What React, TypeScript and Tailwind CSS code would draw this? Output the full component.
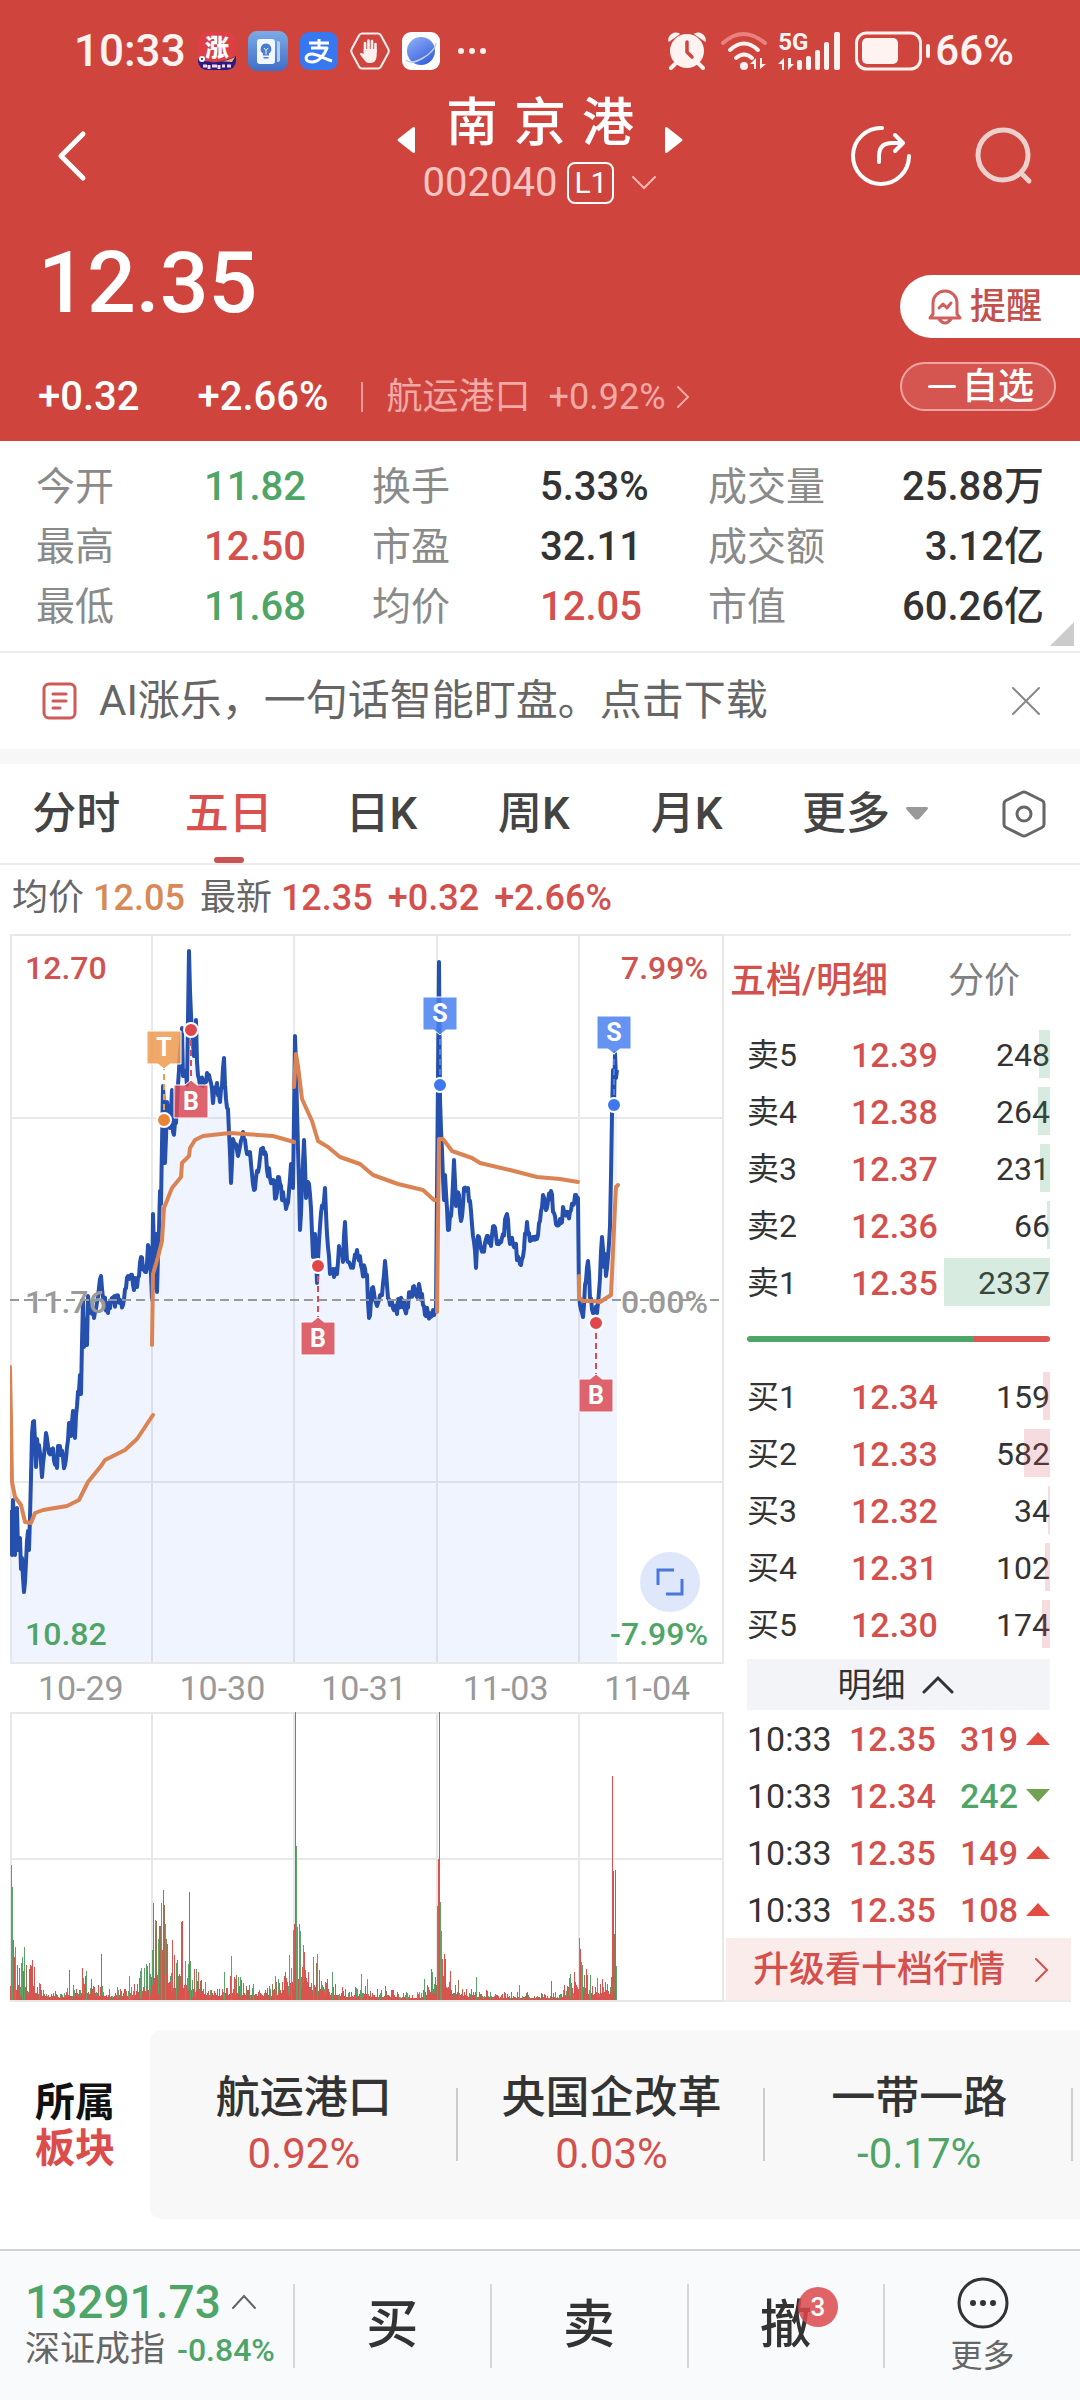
import React from "react";

type Point = [number, number];

const RED = "text-[#d4504d]";
const GREEN = "text-[#4fa567]";

/* ---------- deterministic noise for the intraday series ---------- */

function makeRandom(seed: number) {
  let state = seed;
  return () => {
    state = (state * 1664525 + 1013904223) % 4294967296;
    return state / 4294967296;
  };
}

function roughen(points: Point[], amplitude: number, random: () => number): Point[] {
  const out: Point[] = [];
  for (let i = 0; i < points.length - 1; i++) {
    const [x0, y0] = points[i];
    const [x1, y1] = points[i + 1];
    out.push(points[i]);
    const steps = Math.floor(x1 - x0);
    for (let s = 1; s < steps; s++) {
      const t = s / steps;
      out.push([x0 + (x1 - x0) * t, y0 + (y1 - y0) * t + (random() - 0.5) * 2 * amplitude]);
    }
  }
  out.push(points[points.length - 1]);
  return out;
}

function toPath(points: Point[]) {
  return points.map(([x, y], i) => `${i ? "L" : "M"}${x.toFixed(1)} ${y.toFixed(1)}`).join("");
}

/* ---------- chart data ---------- */

const PRICE: Point[] = [
  [10, 1510], [12, 1555], [13, 1500], [15, 1555], [17, 1508], [18, 1550], [20, 1538], [21, 1569], [22, 1558], [24, 1592],
  [26, 1562], [28, 1531], [29, 1550], [31, 1477], [32, 1434], [34, 1421], [36, 1467], [37, 1439], [40, 1453], [42, 1477],
  [46, 1433], [49, 1453], [52, 1450], [57, 1468], [58, 1446], [65, 1465], [69, 1423], [71, 1436], [73, 1411], [75, 1438],
  [77, 1406], [80, 1375], [81, 1394], [83, 1300], [84, 1347], [85, 1319], [87, 1345], [88, 1296], [94, 1318], [97, 1302],
  [101, 1276], [103, 1298], [108, 1313], [112, 1298], [123, 1305], [128, 1276], [137, 1287], [141, 1257], [146, 1272],
  [148, 1245], [151, 1274], [152, 1300], [153, 1214], [155, 1288], [156, 1234], [157, 1292], [159, 1229], [160, 1191],
  [161, 1204], [163, 1086], [164, 1108], [165, 1163], [167, 1102], [170, 1128], [172, 1090], [173, 1132], [176, 1123],
  [178, 1085], [182, 1028], [183, 1076], [185, 1071], [187, 1085], [189, 951], [190, 991], [192, 1033], [194, 1056],
  [196, 1020], [197, 1062], [200, 1085], [205, 1080], [209, 1075], [213, 1103], [217, 1083], [220, 1102], [224, 1058],
  [226, 1099], [228, 1109], [231, 1183], [233, 1139], [238, 1156], [243, 1132], [247, 1154], [250, 1152], [254, 1190],
  [258, 1172], [261, 1149], [265, 1152], [267, 1170], [273, 1180], [276, 1198], [278, 1177], [286, 1209], [289, 1191],
  [291, 1164], [293, 1188], [295, 1036], [297, 1109], [298, 1149], [300, 1230], [302, 1184], [304, 1140], [306, 1198],
  [308, 1182], [311, 1208], [313, 1257], [315, 1234], [317, 1283], [318, 1260], [321, 1213], [323, 1208], [325, 1188],
  [327, 1234], [330, 1274], [333, 1269], [337, 1274], [339, 1246], [343, 1262], [345, 1222], [347, 1260], [352, 1265],
  [357, 1250], [362, 1269], [367, 1275], [369, 1318], [373, 1287], [378, 1303], [382, 1295], [385, 1261], [388, 1298],
  [395, 1310], [402, 1300], [405, 1310], [413, 1287], [417, 1297], [419, 1284], [423, 1305], [428, 1313], [436, 1310],
  [439, 962], [440, 1099], [442, 1150], [444, 1200], [445, 1175], [448, 1230], [451, 1216], [454, 1160], [456, 1206],
  [459, 1195], [461, 1221], [464, 1188], [468, 1188], [471, 1211], [473, 1236], [476, 1268], [478, 1236], [483, 1249],
  [488, 1236], [491, 1246], [494, 1226], [497, 1244], [503, 1234], [507, 1214], [510, 1244], [515, 1246], [520, 1264],
  [524, 1249], [527, 1222], [530, 1241], [537, 1239], [540, 1221], [543, 1195], [547, 1208], [551, 1191], [554, 1213],
  [559, 1225], [564, 1211], [570, 1212], [576, 1195], [578, 1198], [579, 1295], [583, 1317], [585, 1285], [588, 1261],
  [590, 1298], [593, 1313], [597, 1313], [599, 1292], [602, 1237], [604, 1267], [605, 1254], [606, 1276], [608, 1257],
  [610, 1226], [612, 1114], [613, 1070], [614, 1104], [615, 1053], [616, 1078], [617, 1070],
];

const AVERAGE: Point[][] = [
  [[10, 1367], [11, 1420], [12, 1482], [15, 1497], [21, 1505], [25, 1522], [31, 1523], [35, 1513], [43, 1510], [67, 1506], [79, 1500], [88, 1482], [101, 1466], [105, 1460], [125, 1450], [137, 1439], [145, 1427], [153, 1415]],
  [[152, 1345], [153, 1274], [158, 1257], [162, 1241], [164, 1208], [172, 1188], [181, 1177], [182, 1163], [189, 1156], [190, 1148], [195, 1140], [203, 1136], [230, 1133], [245, 1134], [273, 1136], [294, 1142]],
  [[294, 1087], [296, 1054], [298, 1066], [302, 1099], [312, 1121], [318, 1141], [328, 1147], [340, 1157], [360, 1164], [373, 1175], [398, 1184], [423, 1190], [434, 1200], [437, 1200]],
  [[437, 1312], [439, 1139], [443, 1139], [452, 1151], [472, 1158], [480, 1163], [510, 1170], [537, 1177], [560, 1179], [578, 1182]],
  [[579, 1276], [579, 1298], [583, 1301], [593, 1301], [600, 1302], [611, 1295], [613, 1252], [615, 1206], [616, 1187], [618, 1185]],
];

const VOLUME_ENVELOPE: Point[] = [
  [10, 38], [20, 28], [30, 28], [36, 14], [45, 10], [60, 7], [75, 14], [85, 18], [100, 12], [120, 9], [135, 18], [148, 32],
  [152, 55], [163, 80], [170, 40], [180, 34], [190, 34], [200, 20], [220, 12], [233, 22], [250, 12], [270, 11], [285, 22],
  [294, 60], [299, 70], [304, 36], [318, 28], [330, 15], [345, 9], [365, 13], [380, 8], [420, 6], [434, 24], [440, 66],
  [446, 28], [456, 16], [470, 10], [500, 6], [560, 6], [574, 24], [580, 44], [588, 18], [605, 16], [612, 24], [617, 16],
];

const VOLUME_PEAKS: [number, number, string][] = [
  [11, 1865, "g"], [12, 1887, "g"], [13, 1940, "m"], [15, 1947, "g"], [22, 1957, "g"], [24, 1947, "g"], [32, 1960, "r"],
  [34, 1967, "r"], [69, 1970, "r"], [82, 1968, "r"], [86, 1971, "g"], [101, 1954, "r"], [129, 1976, "g"], [149, 1963, "g"],
  [153, 1903, "r"], [155, 1929, "m"], [160, 1926, "m"], [161, 1903, "g"], [163, 1890, "r"], [164, 1905, "m"], [165, 1924, "g"],
  [172, 1940, "r"], [181, 1922, "r"], [182, 1921, "r"], [185, 1961, "g"], [189, 1892, "r"], [190, 1961, "g"], [194, 1969, "r"],
  [224, 1972, "g"], [231, 1956, "g"], [234, 1977, "r"], [253, 1984, "g"], [275, 1976, "g"], [284, 1976, "r"], [291, 1968, "g"],
  [294, 1924, "r"], [295, 1712, "r"], [296, 1846, "g"], [297, 1927, "g"], [299, 1924, "g"], [300, 1931, "g"], [302, 1967, "r"],
  [313, 1957, "g"], [317, 1954, "g"], [332, 1972, "g"], [361, 1974, "g"], [367, 1979, "g"], [385, 1986, "r"], [424, 1979, "g"],
  [431, 1969, "r"], [437, 1906, "g"], [438, 1859, "r"], [439, 1712, "r"], [440, 1902, "g"], [441, 1931, "g"], [442, 1959, "r"],
  [476, 1977, "g"], [519, 1985, "g"], [551, 1981, "r"], [579, 1938, "g"], [581, 1962, "g"], [582, 1965, "g"], [590, 1975, "g"],
  [602, 1979, "r"], [612, 1776, "r"], [613, 1871, "m"], [614, 1934, "m"], [615, 1870, "m"], [616, 1966, "g"],
];

const BAR_COLORS: Record<string, string> = { r: "#d9534f", g: "#5aa468", m: "#96744f" };

function envelopeAt(x: number) {
  for (let i = 0; i < VOLUME_ENVELOPE.length - 1; i++) {
    const [x0, h0] = VOLUME_ENVELOPE[i];
    const [x1, h1] = VOLUME_ENVELOPE[i + 1];
    if (x >= x0 && x <= x1) return h0 + ((h1 - h0) * (x - x0)) / (x1 - x0);
  }
  return 4;
}

const priceLine = roughen(PRICE, 7, makeRandom(11));
const areaPath = `${toPath(priceLine)}L617 1663L10 1663Z`;

const volumeBars = (() => {
  const random = makeRandom(29);
  const bars: { x: number; top: number; color: string }[] = [];
  for (let x = 10; x < 617; x++) {
    const base = envelopeAt(x);
    const r = random();
    const pick = random();
    bars.push({ x, top: 2000 - Math.max(2, base * (0.3 + 1.1 * r * r)), color: pick < 0.5 ? "r" : pick < 0.78 ? "g" : "m" });
    bars.push({ x, top: 2000 - Math.max(1, base * 0.5 * random()), color: "r" });
  }
  VOLUME_PEAKS.forEach(([x, top, color]) => bars.push({ x, top, color }));
  return bars;
})();

/* ---------- status bar ---------- */

function StatusBar() {
  return (
    <div className="flex h-[42px] items-center pl-[74px] pr-[66px] text-[#fff3f1]">
      <span className="mr-[12px] text-[44px] leading-[42px] font-medium">10:33</span>
      <div className="flex items-center gap-3">
        <svg className="size-[38px]" viewBox="0 0 38 38" aria-hidden="true">
          <defs>
            <clipPath id="zhang"><rect width="38" height="38" rx="9" /></clipPath>
          </defs>
          <g clipPath="url(#zhang)">
            <rect width="38" height="38" fill="#dd3f45" />
            <path d="M0 27q10 4 19 3t19-6v14H0z" fill="#2a1a86" />
            <path d="M20 29q8 1 17-4l-3 5z" fill="#f3b06a" />
            <circle cx="4" cy="27" r="3" fill="#fff" />
            <circle cx="4" cy="27" r="1" fill="#222" />
            <text x="7" y="24" fontSize="24" fontWeight="900" fill="#fff">涨</text>
            <path d="M5 34h4M11 33v4M14 34h5M21 33v4M24 34h3M29 34h4" stroke="#f5d9e4" strokeWidth="3" />
          </g>
        </svg>
        <svg className="size-[40px]" viewBox="0 0 40 40" aria-hidden="true">
          <defs>
            <linearGradient id="tips" x1="0" y1="0" x2="0" y2="1">
              <stop offset="0" stopColor="#7cabe6" />
              <stop offset="1" stopColor="#3f6ec8" />
            </linearGradient>
          </defs>
          <rect width="40" height="40" rx="9" fill="url(#tips)" />
          <path d="M29 10h1q2 0 2 2v17q0 2-2 2h-1z" fill="#b6cdf0" />
          <rect x="9" y="8" width="18" height="25" rx="3" fill="#f2f7ff" />
          <path d="M18 12.500a5.500 5.500 0 0 0-3 10v2h6v-2a5.500 5.500 0 0 0-3-10zM15.500 26h5v1.500h-5z" fill="#4d7cca" />
          <path d="M16 17l2 2.500 2-2.500M18 19.500v4" stroke="#f2f7ff" fill="none" />
        </svg>
        <svg className="size-[38px]" viewBox="0 0 38 38" aria-hidden="true">
          <rect width="38" height="38" rx="9" fill="#3777f0" />
          <path d="M9 11h20M19 7v9M11 16h16c-2 6-8 14-15 14-9 0-7-9 1-8 6 1 12 5 19 7" stroke="#fff" strokeWidth="3" fill="none" strokeLinejoin="round" />
        </svg>
        <svg className="h-[38px] w-[40px]" viewBox="0 0 40 38" aria-hidden="true">
          <path d="M12 1.500h16q2 0 3 2l7 13q1.500 2.500 0 5l-7 13q-1 2-3 2H12q-2 0-3-2l-7-13q-1.500-2.500 0-5l7-13q1-2 3-2z" fill="none" stroke="#fff0ee" strokeWidth="2" />
          <path d="M15 20v-9M18.500 19V8.500M22 19V9M25.500 20v-8" stroke="#fff0ee" strokeWidth="2.600" strokeLinecap="round" />
          <path d="M13.700 17h13v6q0 7-5.500 8h-3q-2 0-4-3l-4.500-6q1-2 4 0z" fill="#fff0ee" />
        </svg>
        <svg className="size-[38px]" viewBox="0 0 38 38" aria-hidden="true">
          <defs>
            <linearGradient id="globe" x1="0" y1="0" x2="0.600" y2="1">
              <stop offset="0" stopColor="#90b2f8" />
              <stop offset="1" stopColor="#3e63dc" />
            </linearGradient>
          </defs>
          <rect width="38" height="38" rx="9" fill="#fff" />
          <circle cx="19" cy="19" r="14" fill="url(#globe)" />
          <path d="M4 28q5 5 17-2T34 11" stroke="#bcd0fa" strokeWidth="1.500" fill="none" />
        </svg>
      </div>
      <svg className="ml-[17px] h-[8px] w-[32px]" viewBox="0 0 32 8" fill="#fff0ee" aria-hidden="true">
        <circle cx="4" cy="4" r="3" />
        <circle cx="15" cy="4" r="3" />
        <circle cx="26" cy="4" r="3" />
      </svg>
      <div className="ml-auto flex items-center">
        <svg className="mr-[14px] h-[38px] w-[38px]" viewBox="0 0 38 38" aria-hidden="true">
          <path d="M1 9a7 7 0 0 1 10-7zM37 9A7 7 0 0 0 27 2z" fill="#fff3f1" stroke="#fff3f1" strokeWidth="1.500" strokeLinejoin="round" />
          <circle cx="19" cy="19" r="17" fill="#fff3f1" />
          <path d="M7 32l-4 4M31 32l4 4" stroke="#fff3f1" strokeWidth="4" strokeLinecap="round" />
          <path d="M19 10v10l5 5" stroke="#cf443d" strokeWidth="3.500" fill="none" strokeLinecap="round" strokeLinejoin="round" />
        </svg>
        <svg className="mr-[10px] h-[40px] w-[48px]" viewBox="0 0 48 40" fill="none" strokeLinecap="round" aria-hidden="true">
          <path d="M3 12q20-18 42 0" stroke="#e9827d" strokeWidth="4" />
          <path d="M10 19q14-13 28 0" stroke="#fff3f1" strokeWidth="4" />
          <path d="M16 27q8-7 16 0" stroke="#fff3f1" strokeWidth="4" />
          <circle cx="24" cy="35" r="4" fill="#fff3f1" />
          <path d="M30 33l6-6v11h-2v-5zM40 27v11l6-5h-4v-6z" fill="#fff3f1" />
        </svg>
        <div className="relative mr-[15px] h-[40px] w-[62px]">
          <span className="absolute -top-[1px] left-0 text-[24px] leading-[24px] font-bold">5G</span>
          <svg className="size-full" viewBox="0 0 62 40" fill="#fff3f1" aria-hidden="true">
            <path d="M0 33l6-6v12H4v-6zM10 27v12l6-6h-3v-6z" />
            <rect x="19" y="29" width="5" height="10" rx="2" />
            <rect x="28" y="25" width="5" height="14" rx="2" />
            <rect x="37" y="19" width="5" height="20" rx="2" />
            <rect x="46" y="11" width="5" height="28" rx="2" />
            <rect x="56" y="1" width="6" height="38" rx="2" />
          </svg>
        </div>
        <svg className="mr-[4px] h-[40px] w-[76px]" viewBox="0 0 76 40" aria-hidden="true">
          <rect x="1.500" y="2" width="64" height="36" rx="10" fill="none" stroke="#fff3f1" strokeWidth="3" />
          <rect x="7" y="7" width="36" height="26" rx="5" fill="#fff3f1" />
          <rect x="71" y="13" width="4" height="14" rx="2" fill="#fff3f1" />
        </svg>
        <span className="text-[42px] leading-[42px] font-medium">66%</span>
      </div>
    </div>
  );
}

/* ---------- header ---------- */

function Header() {
  return (
    <header className="bg-[#cf443d] pt-[30px] text-white">
      <StatusBar />
      <nav className="mt-[24px] grid h-[120px] grid-cols-[1fr_auto_1fr]">
        <button type="button" aria-label="返回" className="flex items-center pl-[56px]">
          <svg className="h-[52px] w-[32px]" viewBox="0 0 32 52" fill="none" stroke="#fff" strokeWidth="5" strokeLinecap="round" strokeLinejoin="round">
            <path d="M27 4L5 26l22 22" />
          </svg>
        </button>
        <div className="flex items-start gap-2">
          <button type="button" aria-label="上一只" className="mt-[30px]">
            <svg className="h-[28px] w-[18px]" viewBox="0 0 18 28" fill="#fff"><path d="M18 2v24q-1 2-3 0L1 15q-1-1 0-2L15 2q2-2 3 0z" /></svg>
          </button>
          <div className="flex flex-col items-center gap-[12px] pt-[2px]">
            <h1 className="flex gap-4 text-[52px] leading-[52px] font-medium">
              <span>南</span>
              <span>京</span>
              <span>港</span>
            </h1>
            <button type="button" className="flex h-[42px] items-center">
              <span className="text-[40px] leading-[42px] text-[#fbc6c3]">002040</span>
              <span className="ml-[10px] rounded-lg border-2 border-white px-[5px] text-[30px] leading-[38px]">L1</span>
              <svg className="ml-[17px] h-[16px] w-[26px]" viewBox="0 0 26 16" fill="none" stroke="#fbb5b2" strokeWidth="2" strokeLinecap="round">
                <path d="M2 2l11 11L24 2" />
              </svg>
            </button>
          </div>
          <button type="button" aria-label="下一只" className="mt-[30px]">
            <svg className="h-[28px] w-[18px]" viewBox="0 0 18 28" fill="#fff"><path d="M0 2v24q1 2 3 0l14-11q1-1 0-2L3 2Q1 0 0 2z" /></svg>
          </button>
        </div>
        <div className="flex items-center justify-end gap-[60px] pr-[47px]">
          <button type="button" aria-label="分享">
            <svg className="size-[64px]" viewBox="0 0 64 64" fill="none" stroke="#fff" strokeWidth="4" strokeLinecap="round" strokeLinejoin="round">
              <path d="M33 4A28 28 0 1 0 60 32" />
              <path d="M30 38v-6q0-13 13-13h11M46 11l8 8-8 8" />
            </svg>
          </button>
          <button type="button" aria-label="搜索">
            <svg className="size-[60px]" viewBox="0 0 60 60" fill="none" stroke="#ebd0ce" strokeWidth="5" strokeLinecap="round">
              <circle cx="30" cy="29" r="25" />
              <path d="M48 47l8 8" />
            </svg>
          </button>
        </div>
      </nav>
      <div className="flex justify-between pb-[22px]">
        <div className="pl-[38px] pt-[22px]">
          <p className="text-[86px] leading-[90px] font-medium">12.35</p>
          <div className="mt-[47px] flex h-[44px] items-center text-[40px] leading-[44px] font-medium">
            <span>+0.32</span>
            <span className="ml-[58px]">+2.66%</span>
            <span className="ml-[32px] h-[30px] w-[2px] bg-[#ee9c98]" />
            <a href="#sector" className="ml-[24px] flex items-center text-[36px] font-normal text-[#f3aaa7]">
              <span>航运港口</span>
              <span className="ml-[18px]">+0.92%</span>
              <svg className="ml-[10px] h-[24px] w-[14px]" viewBox="0 0 14 24" fill="none" stroke="#f3aaa7" strokeWidth="2" strokeLinecap="round">
                <path d="M2 2l10 10L2 22" />
              </svg>
            </a>
          </div>
        </div>
        <div className="flex w-[180px] flex-col gap-6 pt-[59px]">
          <button type="button" className="flex h-[63px] items-center gap-2 rounded-l-full bg-white pl-[28px] text-[36px] leading-[40px] font-medium text-[#c4504c]">
            <svg className="h-[36px] w-[34px]" viewBox="0 0 34 36" fill="none" stroke="#d0605d" strokeWidth="3" strokeLinecap="round" strokeLinejoin="round">
              <path d="M5 25V14a12 12 0 0 1 24 0v11l3 4H2zM11 30q6 8 12 0" />
              <path d="M11 19l4-4 4 4 4-5" />
            </svg>
            提醒
          </button>
          <button type="button" className="mr-[24px] flex h-[49px] items-center gap-[6px] rounded-full border-2 border-[#f0a5a1] bg-[#d55650] pl-[26px] text-[36px] leading-[40px] font-medium">
            <span className="h-[3px] w-[28px] rounded-full bg-white" />
            自选
          </button>
        </div>
      </div>
    </header>
  );
}

/* ---------- key figures ---------- */

const FIGURES: { label: string; value: string; tone: string }[] = [
  { label: "今开", value: "11.82", tone: GREEN },
  { label: "换手", value: "5.33%", tone: "text-[#333333]" },
  { label: "成交量", value: "25.88万", tone: "text-[#333333]" },
  { label: "最高", value: "12.50", tone: RED },
  { label: "市盈", value: "32.11", tone: "text-[#333333]" },
  { label: "成交额", value: "3.12亿", tone: "text-[#333333]" },
  { label: "最低", value: "11.68", tone: GREEN },
  { label: "均价", value: "12.05", tone: RED },
  { label: "市值", value: "60.26亿", tone: "text-[#333333]" },
];

function KeyFigures() {
  return (
    <section className="relative border-b-2 border-[#ececec] px-9 pb-[14px] pt-4">
      <dl className="grid grid-cols-3">
        {FIGURES.map((f) => (
          <div key={f.label} className="group flex h-[60px] items-center text-[39px] leading-[60px]">
            <dt className="w-1/2 text-[#8a8a8a]">{f.label}</dt>
            <dd className={`flex-1 whitespace-nowrap text-[40px] font-medium group-nth-[3n]:text-right ${f.tone}`}>{f.value}</dd>
          </div>
        ))}
      </dl>
      <svg className="absolute bottom-[5px] right-[6px] size-[24px]" viewBox="0 0 24 24" fill="#cccccc" aria-hidden="true">
        <path d="M24 0v24H0z" />
      </svg>
    </section>
  );
}

function Notice() {
  return (
    <section className="flex h-[96px] items-center pl-[42px] pr-[38px]">
      <svg className="h-[38px] w-[35px]" viewBox="0 0 35 38" fill="none" stroke="#cf5a57" strokeWidth="3" strokeLinecap="round" aria-hidden="true">
        <rect x="2" y="2" width="31" height="34" rx="5" />
        <path d="M11 12h13M11 19h13M11 26h7" />
      </svg>
      <p className="ml-[22px] flex-1 text-[42px] leading-[48px] text-[#666666]">AI涨乐，一句话智能盯盘。点击下载</p>
      <button type="button" aria-label="关闭">
        <svg className="size-[32px]" viewBox="0 0 32 32" fill="none" stroke="#888888" strokeWidth="2" strokeLinecap="round">
          <path d="M3 3l26 26M29 3L3 29" />
        </svg>
      </button>
    </section>
  );
}

/* ---------- period tabs ---------- */

function PeriodTabs() {
  return (
    <div className="grid h-[101px] grid-cols-[repeat(5,153fr)_205fr_113fr] border-b-2 border-[#ececec] text-[44px] leading-[52px] font-medium text-[#444444]">
      {["分时", "五日", "日K", "周K", "月K"].map((name) => {
        const active = name === "五日";
        return (
          <button key={name} type="button" aria-pressed={active} className={`relative ${active ? "text-[#d9504e]" : ""}`}>
            {name}
            {active && <span className="absolute bottom-0 left-1/2 h-[6px] w-[30px] -translate-x-1/2 rounded-full bg-[#c95350]" />}
          </button>
        );
      })}
      <button type="button" className="flex items-center justify-center gap-4">
        更多
        <svg className="h-[13px] w-[22px]" viewBox="0 0 22 13" fill="#999999" aria-hidden="true"><path d="M1 0h20q2 1 0 3l-8 9q-2 1-4 0L1 3Q-1 1 1 0z" /></svg>
      </button>
      <button type="button" aria-label="图表设置" className="flex items-center justify-center">
        <svg className="h-[48px] w-[44px]" viewBox="0 0 44 48" fill="none" stroke="#666666" strokeWidth="3" strokeLinejoin="round">
          <path d="M20 2.500q2-1 4 0l16 8q2 1 2 3v21q0 2-2 3l-16 8q-2 1-4 0l-16-8q-2-1-2-3v-21q0-2 2-3z" />
          <circle cx="22" cy="24" r="7" />
        </svg>
      </button>
    </div>
  );
}

/* ---------- charts ---------- */

type Mark = { letter: string; x: number; dot: number; box: number; below: boolean; fill: string; dotFill: string };

const MARKS: Mark[] = [
  { letter: "T", x: 164, dot: 1120, box: 1031, below: false, fill: "#ee9a4f", dotFill: "#ea8538" },
  { letter: "B", x: 191, dot: 1030, box: 1085, below: true, fill: "#d94a55", dotFill: "#e0474a" },
  { letter: "B", x: 318, dot: 1266, box: 1322, below: true, fill: "#d94a55", dotFill: "#e0474a" },
  { letter: "B", x: 596, dot: 1323, box: 1379, below: true, fill: "#d94a55", dotFill: "#e0474a" },
  { letter: "S", x: 440, dot: 1085, box: 997, below: false, fill: "#4a80ee", dotFill: "#3d78ee" },
  { letter: "S", x: 614, dot: 1105, box: 1016, below: false, fill: "#4a80ee", dotFill: "#3d78ee" },
];

function TradeMark({ letter, x, dot, box, below, fill, dotFill }: Mark) {
  const top = box;
  const bottom = box + 33;
  const shape = below
    ? `M${x - 17} ${top}H${x - 6}L${x} ${top - 5}L${x + 6} ${top}H${x + 17}V${bottom}H${x - 17}Z`
    : `M${x - 17} ${top}H${x + 17}V${bottom}H${x + 6}L${x} ${bottom + 5}L${x - 6} ${bottom}H${x - 17}Z`;
  return (
    <g>
      <path d={`M${x} ${dot}V${below ? top - 5 : bottom + 5}`} stroke={fill} strokeWidth="2" strokeDasharray="6 4" />
      <circle cx={x} cy={dot} r="7" fill={dotFill} stroke="#fff" strokeWidth="2" />
      <path d={shape} fill={fill} fillOpacity="0.85" stroke="#fff" strokeWidth="1" />
      <text x={x} y={top + 25} textAnchor="middle" fontSize="25" fontWeight="700" fill="#fff">{letter}</text>
    </g>
  );
}

function PriceChart() {
  return (
    <div className="relative">
      <svg className="block w-full" viewBox="10 934 714 730" role="img" aria-label="五日分时走势">
        <path d={areaPath} fill="#f0f4fe" />
        <path d="M10 1118H723M10 1482H723M152 935V1663M294 935V1663M437 935V1663M579 935V1663" stroke="#8c93a5" strokeOpacity="0.200" strokeWidth="2" fill="none" />
        <rect x="11" y="935" width="712" height="728" fill="none" stroke="#e8e8ea" strokeWidth="2" />
        <path d={toPath(priceLine)} fill="none" stroke="#2650ae" strokeWidth="4" strokeLinejoin="round" />
        <g fontSize="32" fontWeight="500" fill="#9a9a9a">
          <text x="25" y="1313">11.76</text>
          <text x="708" y="1313" textAnchor="end">0.00%</text>
        </g>
        <path d="M10 1300H723" stroke="#999999" strokeWidth="2" strokeDasharray="9 5" />
        {AVERAGE.map((day, i) => (
          <path key={i} d={toPath(day)} fill="none" stroke="#dc8354" strokeWidth="4" strokeLinejoin="round" strokeLinecap="round" />
        ))}
        {MARKS.map((m) => (
          <TradeMark key={`${m.letter}${m.x}`} {...m} />
        ))}
        <g fontSize="32" fontWeight="500">
          <text x="25" y="979" fill="#cf5350">12.70</text>
          <text x="708" y="979" fill="#cf5350" textAnchor="end">7.99%</text>
          <text x="25" y="1645" fill="#4fa567">10.82</text>
          <text x="708" y="1645" fill="#4fa567" textAnchor="end">-7.99%</text>
        </g>
      </svg>
      <button type="button" aria-label="全屏" className="absolute bottom-[52px] right-[24px] flex size-[60px] items-center justify-center rounded-full bg-[#dfe7fb]">
        <svg className="size-[30px]" viewBox="0 0 30 30" fill="none" stroke="#4a77dc" strokeWidth="3">
          <path d="M3 18V3h16M27 12v15H11" />
        </svg>
      </button>
    </div>
  );
}

function VolumeChart() {
  return (
    <svg className="block w-full" viewBox="10 1712 714 290" role="img" aria-label="成交量" shapeRendering="crispEdges">
      <path d="M10 1713H723M10 1859H723M10 2001H724M11 1712V2001M152 1712V2001M294 1712V2001M437 1712V2001M579 1712V2001M723 1712V2001" stroke="#e8e8ea" strokeWidth="2" fill="none" />
      {volumeBars.map((b, i) => (
        <rect key={i} x={b.x} y={b.top} width="1" height={2000 - b.top} fill={BAR_COLORS[b.color]} />
      ))}
    </svg>
  );
}

/* ---------- order book ---------- */

type Level = { name: string; price: string; qty: number };

const ASKS: Level[] = [
  { name: "卖5", price: "12.39", qty: 248 },
  { name: "卖4", price: "12.38", qty: 264 },
  { name: "卖3", price: "12.37", qty: 231 },
  { name: "卖2", price: "12.36", qty: 66 },
  { name: "卖1", price: "12.35", qty: 2337 },
];

const BIDS: Level[] = [
  { name: "买1", price: "12.34", qty: 159 },
  { name: "买2", price: "12.33", qty: 582 },
  { name: "买3", price: "12.32", qty: 34 },
  { name: "买4", price: "12.31", qty: 102 },
  { name: "买5", price: "12.30", qty: 174 },
];

const TRADES = [
  { price: "12.35", qty: 319, up: true },
  { price: "12.34", qty: 242, up: false },
  { price: "12.35", qty: 149, up: true },
  { price: "12.35", qty: 108, up: true },
];

function Levels({ rows, tint }: { rows: Level[]; tint: string }) {
  return (
    <table className="w-full table-fixed border-collapse">
      <tbody>
        {rows.map((r) => (
          <tr key={r.name} className="h-[57px]">
            <th scope="row" className="w-[104px] p-0 text-left text-[32px] leading-[48px] font-normal text-[#333333]">{r.name}</th>
            <td className={`p-0 text-[34px] leading-[48px] font-medium ${RED}`}>{r.price}</td>
            <td className="relative w-[106px] p-0 text-right text-[32px] leading-[48px] text-[#333333]">
              {r.qty}
              <span className={`absolute right-0 top-1 h-[48px] ${tint}`} style={{ width: `${(r.qty / 2337) * 100}%` }} />
            </td>
          </tr>
        ))}
      </tbody>
    </table>
  );
}

function OrderBook() {
  return (
    <aside className="flex w-[347px] shrink-0 flex-col border-y-2 border-[#ececec]">
      <div className="flex h-[90px] items-center pl-[6px] text-[36px] leading-[44px]">
        <button type="button" className={`font-medium ${RED}`}>五档/明细</button>
        <button type="button" className="ml-[60px] text-[#808080]">分价</button>
      </div>
      <div className="pl-[23px] pr-[21px]">
        <Levels rows={ASKS} tint="bg-[#3b9c66]/20" />
        <div className="mb-[26px] mt-[25px] flex h-[6px] overflow-hidden rounded-full">
          <span className="w-3/4 bg-[#4fa567]" />
          <span className="w-1/4 bg-[#dd5854]" />
        </div>
        <Levels rows={BIDS} tint="bg-[#d4505a]/20" />
        <button type="button" className="mt-[6px] flex h-[51px] w-full items-center justify-center gap-4 bg-[#f3f4f8] pr-[6px] text-[34px] leading-[44px] text-[#333333]">
          明细
          <svg className="h-[20px] w-[32px]" viewBox="0 0 32 20" fill="none" stroke="#333333" strokeWidth="3" strokeLinecap="round">
            <path d="M2 17L16 3l14 14" />
          </svg>
        </button>
        <table className="w-full table-fixed border-collapse text-[34px] leading-[48px]">
          <tbody>
            {TRADES.map((t, i) => (
              <tr key={i} className="h-[57px]">
                <td className="w-[102px] p-0 text-[#333333]">10:33</td>
                <td className={`w-[90px] p-0 font-medium ${RED}`}>{t.price}</td>
                <td className={`p-0 text-right font-medium ${t.up ? RED : GREEN}`}>{t.qty}</td>
                <td className="w-[32px] p-0">
                  <svg className="ml-auto h-[13px] w-[24px]" viewBox="0 0 24 13" aria-label={t.up ? "买入" : "卖出"}>
                    {t.up ? <path d="M12 0l12 13H0z" fill="#e24c42" /> : <path d="M0 0h24L12 13z" fill="#72a151" />}
                  </svg>
                </td>
              </tr>
            ))}
          </tbody>
        </table>
      </div>
      <a href="#upgrade" className={`ml-[2px] flex flex-1 items-center justify-between bg-[#fbecec] pl-[27px] pr-[22px] pt-[2px] text-[36px] leading-[44px] font-medium ${RED}`}>
        升级看十档行情
        <svg className="h-[26px] w-[15px]" viewBox="0 0 15 26" fill="none" stroke="#d4504d" strokeWidth="2" strokeLinecap="round">
          <path d="M2 2l11 11L2 24" />
        </svg>
      </a>
    </aside>
  );
}

/* ---------- sectors and bottom bar ---------- */

const SECTORS = [
  { name: "航运港口", change: "0.92%", tone: RED },
  { name: "央国企改革", change: "0.03%", tone: RED },
  { name: "一带一路", change: "-0.17%", tone: GREEN },
];

function Sectors() {
  return (
    <section id="sector" className="mb-[30px] mt-[28px] flex">
      <h2 className="flex w-[150px] shrink-0 flex-col items-center justify-center pt-[2px] text-[40px] leading-[46px] font-bold text-[#111111]">
        <span>所属</span>
        <span className="text-[#dc4c4b]">板块</span>
      </h2>
      <ul className="flex h-[189px] flex-1 items-center rounded-l-xl bg-[#f8f8f8] pr-[7px]">
        {SECTORS.map((s) => (
          <li key={s.name} className="relative flex flex-1 flex-col items-center gap-[4px] pt-[2px]">
            <span className="text-[44px] leading-[52px] font-medium text-[#333333]">{s.name}</span>
            <span className={`text-[42px] leading-[52px] ${s.tone}`}>{s.change}</span>
            <span className="absolute right-0 top-[18px] h-[73px] w-[2px] bg-[#cccccc]" />
          </li>
        ))}
      </ul>
    </section>
  );
}

function Divider() {
  return <span className="h-[84px] w-[2px] shrink-0 bg-[#d6d7da]" />;
}

function BottomBar() {
  return (
    <footer className="flex h-[151px] items-center border-t-2 border-[#d0d2d4] bg-[#f9fafc] text-[#333333]">
      <a href="#index" className="flex w-[293px] shrink-0 flex-col gap-[6px] pb-1 pl-[25px]">
        <span className={`flex items-center text-[46px] leading-[46px] font-medium ${GREEN}`}>
          13291.73
          <svg className="ml-[10px] h-[16px] w-[26px]" viewBox="0 0 26 16" fill="none" stroke="#666666" strokeWidth="2" strokeLinecap="round" aria-hidden="true">
            <path d="M2 14L13 2l11 12" />
          </svg>
        </span>
        <span className="flex items-center whitespace-nowrap text-[35px] leading-[38px] text-[#666666]">
          深证成指
          <span className={`ml-3 text-[32px] font-medium ${GREEN}`}>-0.84%</span>
        </span>
      </a>
      <Divider />
      <button type="button" className="flex-1 text-[52px] leading-[60px] font-medium">买</button>
      <Divider />
      <button type="button" className="flex-1 text-[52px] leading-[60px] font-medium">卖</button>
      <Divider />
      <button type="button" className="flex-1 text-[52px] leading-[60px] font-medium">
        <span className="relative">
          撤
          <span className="absolute -right-[26px] -top-[8px] flex size-[40px] items-center justify-center rounded-full bg-[#dc484d]/85 text-[26px] leading-none text-white">3</span>
        </span>
      </button>
      <Divider />
      <button type="button" className="flex flex-1 flex-col items-center gap-2 text-[32px] leading-[38px] text-[#666666]">
        <svg className="size-[52px]" viewBox="0 0 52 52" aria-hidden="true">
          <circle cx="26" cy="26" r="24" fill="none" stroke="#333333" strokeWidth="3" />
          <g fill="#333333">
            <circle cx="16" cy="26" r="3" />
            <circle cx="26" cy="26" r="3" />
            <circle cx="36" cy="26" r="3" />
          </g>
        </svg>
        更多
      </button>
    </footer>
  );
}

export default function App() {
  return (
    <div className="flex min-h-screen flex-col bg-white font-['Roboto','Noto_Sans_CJK_SC',sans-serif] text-[#333333]">
      <Header />
      <KeyFigures />
      <Notice />
      <div className="h-[15px] bg-[#f7f7f7]" />
      <PeriodTabs />
      <div className="flex h-[69px] items-center pb-[3px] pl-[12px] text-[36px] leading-[44px] text-[#666666]">
        均价
        <span className="ml-[9px] font-medium text-[#d78a58]">12.05</span>
        <span className="ml-[15px]">最新</span>
        <span className={`ml-[9px] font-medium ${RED}`}>12.35</span>
        <span className={`ml-[15px] font-medium ${RED}`}>+0.32</span>
        <span className={`ml-[15px] font-medium ${RED}`}>+2.66%</span>
      </div>
      <main className="flex items-stretch pl-[10px] pr-[9px]">
        <div className="flex-1">
          <PriceChart />
          <div className="grid h-[48px] grid-cols-5 items-center pr-[6px] text-center text-[34px] leading-[48px] text-[#999999]">
            {["10-29", "10-30", "10-31", "11-03", "11-04"].map((d) => (
              <span key={d}>{d}</span>
            ))}
          </div>
          <VolumeChart />
        </div>
        <OrderBook />
      </main>
      <Sectors />
      <BottomBar />
    </div>
  );
}
